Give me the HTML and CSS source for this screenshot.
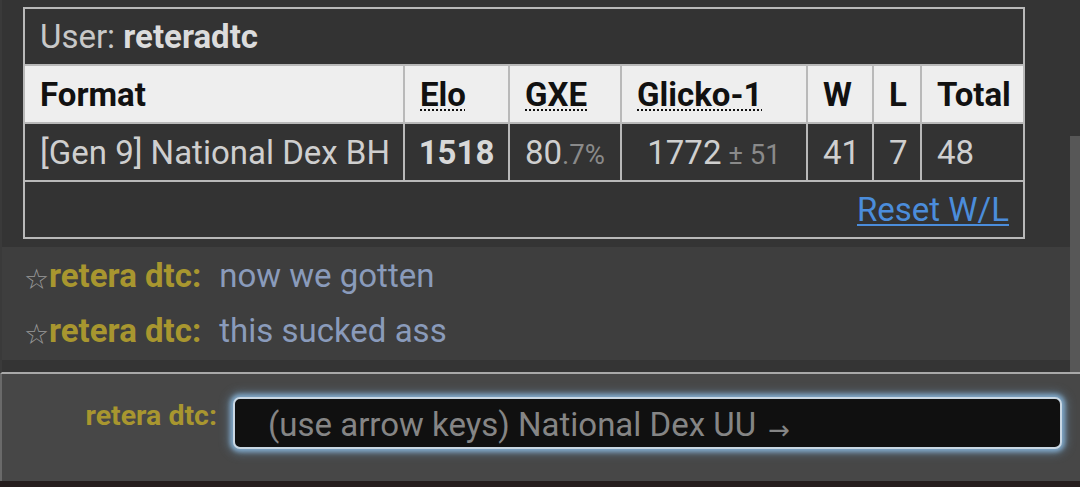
FILE: index.html
```html
<!DOCTYPE html>
<html>
<head>
<meta charset="utf-8">
<link rel="stylesheet" href="styles.css">
</head>
<body>
<div class="app">
  <div class="log">
    <div class="log-inner">
      <div class="ladder">
        <table class="ranks">
          <colgroup>
            <col class="c-format"><col class="c-elo"><col class="c-gxe"><col class="c-glicko"><col class="c-w"><col class="c-l"><col class="c-total">
          </colgroup>
          <tr class="user-row"><td colspan="7">User: <strong>reteradtc</strong></td></tr>
          <tr class="head-row">
            <th>Format</th>
            <th><abbr>Elo</abbr></th>
            <th><abbr>GXE</abbr></th>
            <th><abbr>Glicko-1</abbr></th>
            <th>W</th>
            <th>L</th>
            <th>Total</th>
          </tr>
          <tr class="data-row">
            <td>[Gen 9] National Dex BH</td>
            <td class="center"><strong>1518</strong></td>
            <td class="center">80<small>.7%</small></td>
            <td class="center">1772<small> ± 51</small></td>
            <td>41</td>
            <td>7</td>
            <td>48</td>
          </tr>
          <tr class="reset-row"><td colspan="7"><a href="#">Reset W/L</a></td></tr>
        </table>
      </div>
      <div class="chat">
        <div class="msg"><span class="star">☆</span><strong class="name">retera dtc:</strong><span class="text">now we gotten</span></div>
        <div class="msg"><span class="star">☆</span><strong class="name">retera dtc:</strong><span class="text">this sucked ass</span></div>
      </div>
    </div>
    <div class="thumb"></div>
  </div>
  <div class="composer">
    <div class="label">retera dtc:</div>
    <div class="input">(use arrow keys) National Dex UU <span class="arrow">→</span></div>
  </div>
  <div class="bottom-strip"></div>
</div>
</body>
</html>
```

FILE: styles.css
```css
html, body {
  margin: 0;
  padding: 0;
}
body {
  width: 1080px;
  height: 487px;
  overflow: hidden;
  background: #231c1c;
  font-family: Roboto, "Liberation Sans", sans-serif;
}
.app {
  display: flex;
  flex-direction: column;
  height: 487px;
}
.log {
  position: relative;
  height: 372px;
  background: #343434;
  border-bottom: 2px solid #a9a9a9;
  border-left: 2px solid #3a3a3a;
  box-sizing: content-box;
}
.log-inner {
  width: 1068px;
  padding-top: 7px;
}
.ladder {
  padding-left: 21px;
}
.ranks {
  border-collapse: collapse;
  table-layout: fixed;
  width: 1002px;
  border: 2px solid #b9b9b9;
  font-size: 33px;
  color: #d2d2d2;
}
.ranks td, .ranks th {
  border: 2px solid #b9b9b9;
  height: 58px;
  padding: 0 14px 0 15px;
  box-sizing: border-box;
  text-align: left;
  vertical-align: middle;
  white-space: nowrap;
}
.ranks .user-row td {
  height: 57px;
}
.ranks .reset-row td {
  height: 57px;
}
.c-format { width: 380px; }
.c-elo { width: 105px; }
.c-gxe { width: 112px; }
.c-glicko { width: 186px; }
.c-w { width: 66px; }
.c-l { width: 48px; }
.c-total { width: 103px; }
.user-row td {
  color: #c8c8c8;
  background: #333;
}
.user-row strong {
  color: #dcdcdc;
}
.head-row th {
  background: #eeeeee;
  color: #111;
  font-weight: bold;
}
.head-row abbr {
  text-decoration: underline dotted;
  text-decoration-thickness: 2px;
  text-underline-offset: 4px;
}
.data-row td {
  background: #333;
  color: #cfcfcf;
}
.data-row td.center {
  text-align: center;
  padding: 0 4px;
}
.data-row strong {
  color: #d8d8d8;
}
.data-row small {
  font-size: 27.5px;
  color: #8a8a8a;
}
.reset-row td {
  text-align: right;
  background: #333;
}
.reset-row a {
  color: #4b8ddb;
  text-decoration: underline;
  text-decoration-thickness: 2px;
  text-underline-offset: 3px;
}
.chat {
  margin-top: 8px;
  background: #3e3e3e;
  padding: 1px 0 2px 22px;
  font-size: 33px;
}
.msg {
  height: 55px;
  line-height: 55px;
  white-space: nowrap;
}
.star {
  display: inline-block;
  width: 25px;
  color: #9a9a9a;
  font-size: 28px;
  font-family: "DejaVu Sans", sans-serif;
  font-weight: normal;
  vertical-align: -2px;
}
.name {
  color: #a8962f;
  font-weight: bold;
  margin-right: 18px;
}
.text {
  color: #8a9bbb;
}
.thumb {
  position: absolute;
  right: 0;
  top: 136px;
  width: 10px;
  bottom: 0;
  background: #575757;
}
.composer {
  height: 107px;
  background: #474747;
  border-left: 2px solid #6a6a6a;
  display: flex;
  align-items: flex-start;
  padding-top: 23px;
  box-sizing: border-box;
}
.label {
  width: 215px;
  text-align: right;
  color: #a8962f;
  font-weight: bold;
  font-size: 28.5px;
  line-height: 34px;
  padding-top: 2px;
}
.input {
  margin-left: 16px;
  width: 829px;
  height: 52px;
  box-sizing: border-box;
  background: #101010;
  border: 2px solid #c9d7e3;
  border-radius: 7px;
  box-shadow: 0 0 4px 3px #7fa6c6, 0 0 10px 5px rgba(110, 150, 185, 0.45);
  color: #858585;
  font-size: 33px;
  line-height: 52px;
  padding-left: 33px;
  white-space: nowrap;
}
.arrow {
  font-size: 26px;
  margin-left: 4px;
  font-family: "DejaVu Sans", sans-serif;
  vertical-align: -3px;
}
.bottom-strip {
  height: 6px;
  background: #251d1d;
}
```
